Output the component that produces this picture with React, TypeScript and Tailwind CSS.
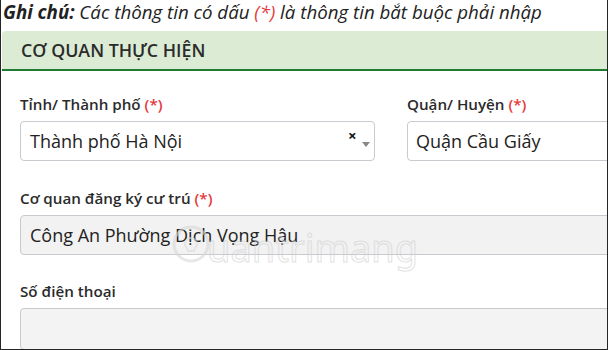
import React from "react";

const font = { fontFamily: '"Open Sans", "Noto Sans", sans-serif' };

function Req() {
  return <span className="text-[#e5393b]">(*)</span>;
}

function Label({ children }: { children: React.ReactNode }) {
  return (
    <div className="text-[15.2px] leading-[24px] font-semibold text-[#2b2b2b] mb-[5px] whitespace-nowrap">
      {children}
    </div>
  );
}

export default function App() {
  return (
    <div
      className="relative w-[608px] h-[350px] overflow-hidden bg-white border-l border-r border-b border-[#262626] text-[#333]"
      style={font}
    >
      <p className="pl-[2px] text-[18.7px] leading-[24px] italic text-[#222] whitespace-nowrap">
        <span className="font-bold">Ghi chú:</span> Các thông tin có dấu{" "}
        <Req /> là thông tin bắt buộc phải nhập
      </p>

      <div className="mt-[7px] ml-[1px] rounded-tl-[4px] bg-[#dcebd4] border-b-2 border-[#1f7a32] pl-[19px] py-[7px]">
        <h2 className="text-[17.8px] leading-[24px] font-semibold text-[#2b2b2b]">
          CƠ QUAN THỰC HIỆN
        </h2>
      </div>

      <div className="w-[760px] pl-[19px] pt-[21px]">
        <div className="grid grid-cols-[355px_1fr] gap-x-[32px]">
          <div>
            <Label>
              Tỉnh/ Thành phố <Req />
            </Label>
            <div className="relative h-[40px] rounded-[4px] border border-[#c9c9d0] bg-white flex items-center pl-[9px]">
              <span className="text-[18px] leading-[24px] text-[#222]">Thành phố Hà Nội</span>
              <span className="absolute left-[327px] top-[5px] text-[15px] font-bold leading-[16px] text-[#111]">
                ×
              </span>
              <span className="absolute left-[341px] top-[20px] w-0 h-0 border-l-[4px] border-r-[4px] border-t-[5px] border-l-transparent border-r-transparent border-t-[#888]" />
            </div>
          </div>
          <div>
            <Label>
              Quận/ Huyện <Req />
            </Label>
            <div className="h-[40px] rounded-[4px] border border-[#c9c9d0] bg-white flex items-center pl-[8px]">
              <span className="text-[18px] leading-[24px] text-[#222]">Quận Cầu Giấy</span>
            </div>
          </div>
        </div>

        <div className="mt-[25px]">
          <Label>
            Cơ quan đăng ký cư trú <Req />
          </Label>
          <div className="h-[40px] rounded-[4px] border border-[#c9c9d0] bg-[#f2f2f2] flex items-center pl-[9px]">
            <span className="text-[18px] leading-[24px] text-[#222]">Công An Phường Dịch Vọng Hậu</span>
          </div>
        </div>

        <div className="mt-[24px]">
          <Label>Số điện thoại</Label>
          <div className="h-[42px] rounded-[4px] border border-[#c9c9d0] bg-[#f3f3f4]" />
        </div>
      </div>

      {/* watermark */}
      <div className="absolute left-[170px] top-[222px] flex items-end pointer-events-none opacity-60">
        <svg width="40" height="44" viewBox="0 0 40 44" fill="none">
          <circle cx="20" cy="22" r="17" stroke="#d8d8d8" strokeWidth="3" />
          <path d="M14 22a6 6 0 1 1 12 0c0 3-3 4-3 7h-6c0-3-3-4-3-7z" stroke="#dcdcdc" strokeWidth="2" />
          <path d="M20 5v3M8 10l2 2M32 10l-2 2" stroke="#dcdcdc" strokeWidth="2" />
        </svg>
        <span
          className="text-[38px] leading-[38px] -ml-[4px]"
          style={{ fontFamily: '"Noto Sans", sans-serif', WebkitTextStroke: "1px #d0d0d0", color: "transparent" }}
        >
          uantrimang
        </span>
      </div>
    </div>
  );
}
